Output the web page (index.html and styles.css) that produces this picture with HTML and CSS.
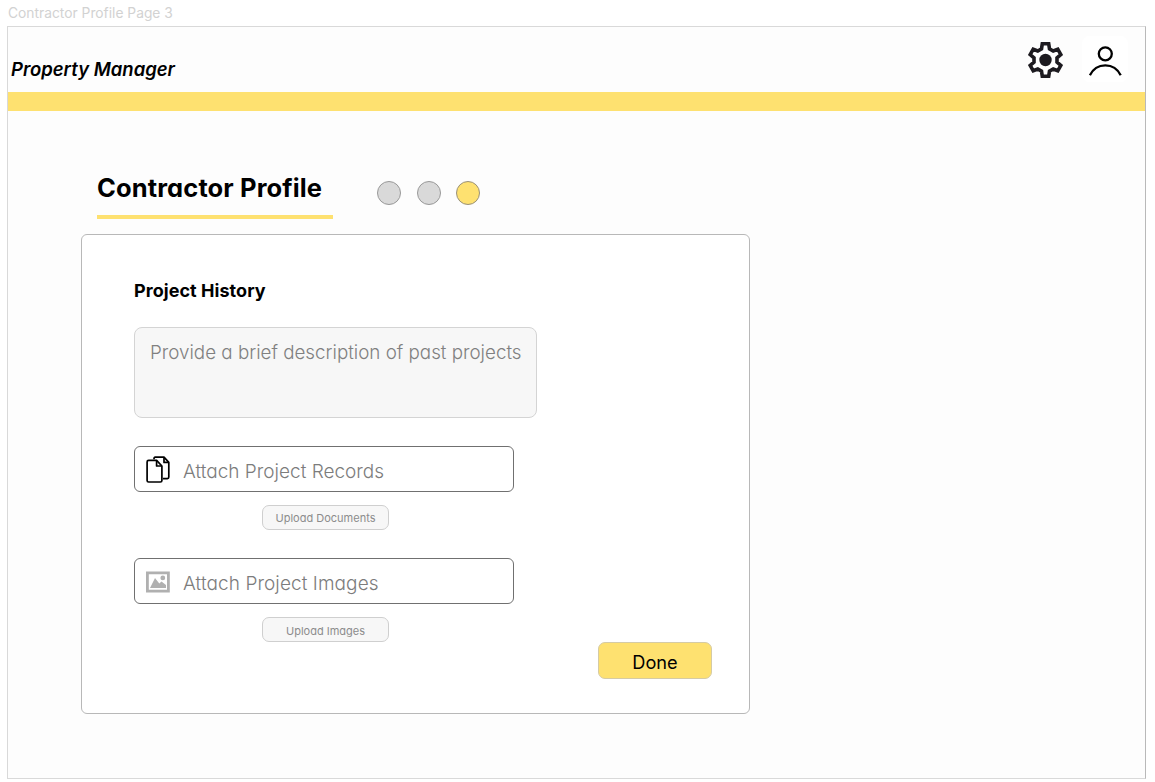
FILE: index.html
```
<!DOCTYPE html>
<html lang="en">
<head>
<meta charset="utf-8">
<title>Contractor Profile</title>
<link rel="stylesheet" href="styles.css">
</head>
<body>
<div class="frame-label"><span>Contractor Profile Page 3</span></div>
<div class="frame">
  <header class="header">
    <div class="brand"><span>Property Manager</span></div>
    <div class="actions">
      <svg class="gear" width="38" height="38" viewBox="0 0 38 38">
        <path d="M16.3 2.8H22.7L23.5 7.9L27.2 10L31.8 8.2L34.8 13.6L31 16.8V21.2L34.8 24.4L31.8 29.8L27.2 28L23.5 30.1L22.7 35.2H16.3L15.5 30.1L11.8 28L7.2 29.8L4.2 24.4L8 21.2V16.8L4.2 13.6L7.2 8.2L11.8 10L15.5 7.9Z" fill="#fff" stroke="#1d1b20" stroke-width="3.6"/>
        <circle cx="19.5" cy="19" r="6.2" fill="#1d1b20"/>
      </svg>
      <svg class="user" width="46" height="46" viewBox="0 0 46 46" fill="none" stroke="#000" stroke-width="2.3">
        <rect width="46" height="46" rx="7" fill="#fff" stroke="none"/>
        <circle cx="23.3" cy="17.8" r="6.5"/>
        <path d="M7.9 39.3C14.3 26 32.3 26 38.7 39.3"/>
      </svg>
    </div>
  </header>
  <div class="band"></div>
  <main class="main">
    <div class="heading">
      <h1 class="title"><span>Contractor Profile</span></h1>
      <div class="steps"><i class="dot"></i><i class="dot"></i><i class="dot dot-on"></i></div>
    </div>
    <section class="card">
      <h2 class="subtitle"><span>Project History</span></h2>
      <div class="description"><span>Provide a brief description of past projects</span></div>
      <div class="attach">
        <svg width="26" height="28" viewBox="0 0 26 28" fill="none" stroke="#000" stroke-width="1.7" stroke-linejoin="round">
          <path d="M9 4.2V3.4Q9 2.2 10.2 2.2H19L23.8 7.4V22Q23.8 23.6 22.4 23.6H18"/>
          <path d="M19 2.2V7.4H23.8"/>
          <path d="M3.6 5.4H11.6L16.9 11V25.4Q16.9 27 15.4 27H3.6Q2.1 27 2.1 25.4V7Q2.1 5.4 3.6 5.4Z"/>
          <path d="M11.6 5.4V11H16.9"/>
        </svg>
        <span class="records">Attach Project Records</span>
      </div>
      <div class="upload"><span class="up-docs">Upload Documents</span></div>
      <div class="attach">
        <svg width="26" height="28" viewBox="0 0 26 28">
          <path d="M2.4 5.9H23.4V24.1H2.4Z" fill="none" stroke="#b0b0b0" stroke-width="2.8"/>
          <path d="M5 21L10 11L14.3 16.5L16.5 14.5L21 18V21Z" fill="#b0b0b0"/>
          <circle cx="17.8" cy="10.9" r="2.4" fill="#b0b0b0"/>
        </svg>
        <span class="images">Attach Project Images</span>
      </div>
      <div class="upload upload-images"><span class="up-imgs">Upload Images</span></div>
      <div class="done"><span>Done</span></div>
    </section>
  </main>
</div>
</body>
</html>
```
FILE: styles.css
```
* { box-sizing: border-box; }
body {
  margin: 0;
  height: 782px;
  overflow: hidden;
  background: #fff;
  font-family: Inter, "Liberation Sans", sans-serif;
  font-feature-settings: "cv11";
}
span { white-space: nowrap; }
.frame-label {
  height: 26px;
  padding: 4px 0 0 8px;
  font-size: 13.8px;
  line-height: 18px;
  color: #d2d2d2;
  font-feature-settings: normal;
}
.frame {
  width: 1139px;
  height: 753px;
  margin-left: 7px;
  background: #fdfdfd;
  border: 1px solid #d9d9d9;
  border-right-color: #b9b9b9;
}
.header {
  height: 65px;
  display: flex;
  justify-content: space-between;
  padding: 9px 17px 0 3px;
}
.brand {
  padding-top: 21px;
  font-size: 18.5px;
  line-height: 24px;
  font-weight: 600;
  font-style: italic;
  font-feature-settings: normal;
}
.actions { display: flex; gap: 18px; }
.gear { margin-top: 5px; }
.band { height: 19px; background: #fee170; }
.main { padding-left: 73px; }
.heading { height: 123px; display: flex; padding: 60px 0 0 16px; }
.title {
  margin: 0;
  width: 236px;
  height: 48px;
  border-bottom: 4px solid #fee170;
  font-size: 25.5px;
  line-height: 34px;
  font-weight: 700;
  letter-spacing: 0.12px;
}
.steps { display: flex; gap: 15.5px; margin: 10px 0 0 44px; }
.dot {
  width: 24px;
  height: 24px;
  border: 1px solid #999;
  border-radius: 50%;
  background: #d9d9d9;
}
.dot-on { background: #fee170; border-color: #99917a; }
.card {
  width: 669px;
  height: 480px;
  padding: 43px 0 0 52px;
  border: 1px solid #b8b8b8;
  border-radius: 6px;
  background: #fff;
}
.subtitle {
  margin: 0;
  height: 49px;
  padding-top: 1px;
  font-size: 18px;
  line-height: 24px;
  font-weight: 700;
  letter-spacing: 0.05px;
}
.description {
  width: 403px;
  height: 91px;
  padding: 12px 0 0 15px;
  border: 1px solid #d4d4d4;
  border-radius: 8px;
  background: #f7f7f7;
  color: #808080;
  font-size: 18.8px;
  line-height: 26px;
  font-weight: 300;
}
.attach {
  width: 380px;
  height: 46px;
  margin-top: 28px;
  padding: 4px 0 0 10px;
  display: flex;
  align-items: center;
  gap: 12px;
  border: 1px solid #707070;
  border-radius: 6px;
  color: #7c7c7c;
  font-size: 19px;
  font-weight: 300;
}
.attach svg { margin-top: -4px; }
.upload {
  width: 127px;
  height: 25px;
  margin: 13px 0 0 128px;
  display: flex;
  align-items: center;
  justify-content: center;
  border: 1px solid #cfcfcf;
  border-radius: 7px;
  background: #f7f7f7;
  color: #8c8c8c;
  font-size: 11px;
}
.upload-images { padding-top: 2px; }
.images { letter-spacing: 0.08px; }
.done {
  width: 114px;
  height: 37px;
  margin: 0 0 0 464px;
  padding-top: 3px;
  display: flex;
  align-items: center;
  justify-content: center;
  border: 1px solid #d5cba5;
  border-radius: 7px;
  background: #fee170;
  font-size: 18.2px;
}
```
